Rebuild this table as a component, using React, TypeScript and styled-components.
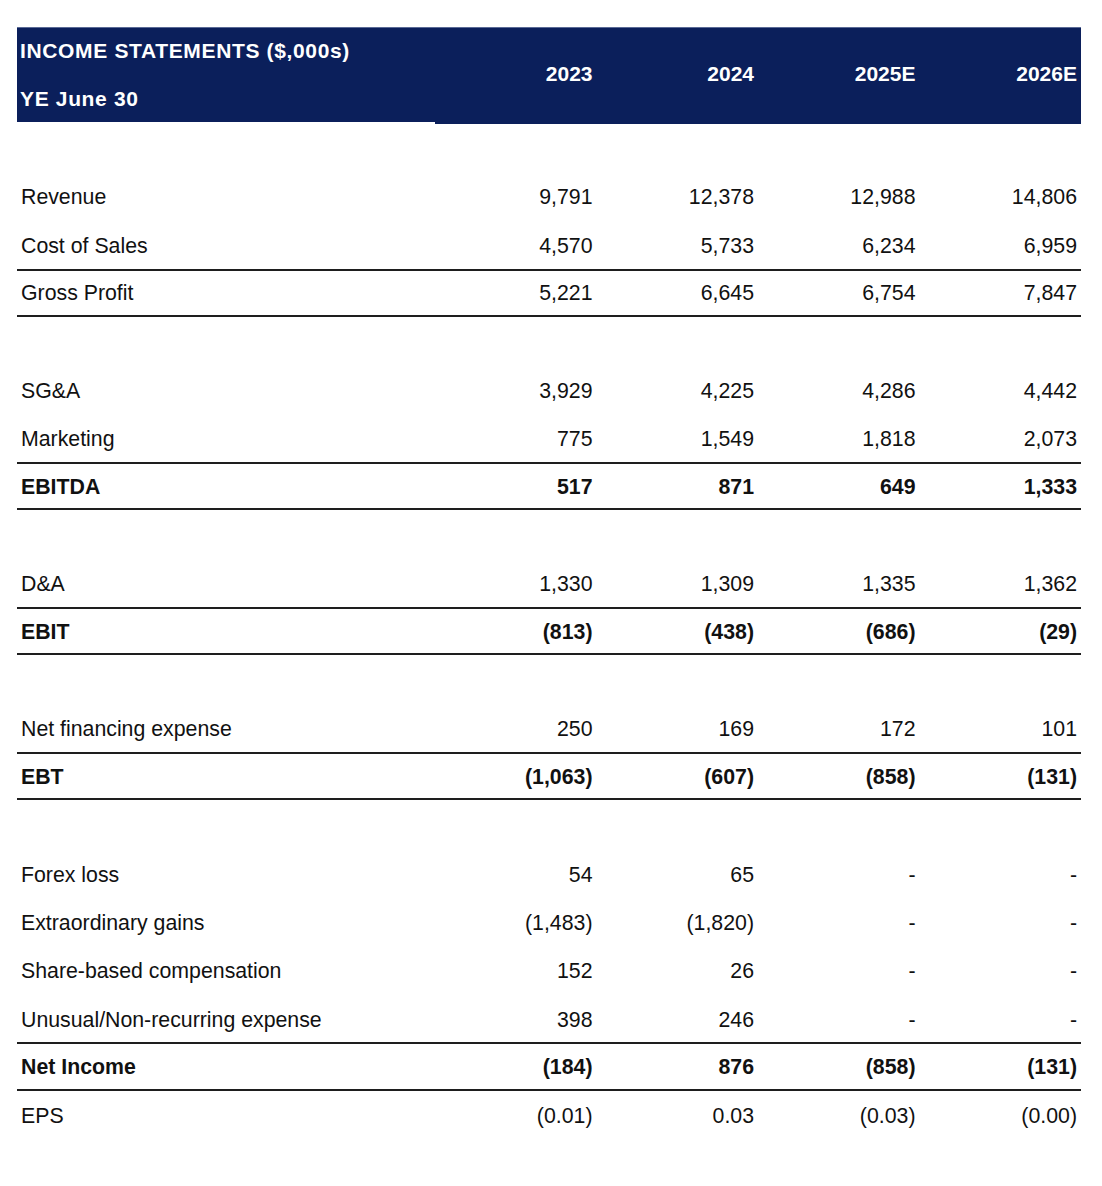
import React from "react";
import styled, { createGlobalStyle } from "styled-components";

const GlobalStyle = createGlobalStyle`
  html, body {
    margin: 0;
    padding: 0;
    background: #ffffff;
  }
  body {
    font-family: "Liberation Sans", Arial, sans-serif;
    color: #111111;
  }
`;

const NAVY = "#0b1f5b";
const COLS = "418px repeat(4, 161.5px)";
const ROW_H = 48.37;

const Page = styled.div`
  padding: 27px 0 0 17px;
  width: 1064px;
`;

const Header = styled.div`
  display: grid;
  grid-template-columns: ${COLS};
  align-items: start;
  color: #ffffff;
  font-weight: 700;
  font-size: 21px;
`;

const TitleCell = styled.div`
  background: ${NAVY};
  height: 95px;
  box-sizing: border-box;
  border-top: 1px solid #5a6a95;
  padding-left: 3px;
  display: grid;
  grid-template-rows: 45px 51px;
  align-items: center;
`;

const TitleLine = styled.div`
  line-height: 24px;
  white-space: nowrap;
  letter-spacing: 0.65px;
`;

const YearsBlock = styled.div`
  grid-column: 2 / span 4;
  background: ${NAVY};
  height: 97px;
  box-sizing: border-box;
  border-top: 1px solid #5a6a95;
  display: grid;
  grid-template-columns: repeat(4, 1fr);
  align-items: center;
  padding-bottom: 5px;
`;

const Year = styled.div`
  text-align: right;
  padding-right: 4px;
  line-height: 24px;
`;

const Spacer = styled.div<{ $h: number }>`
  height: ${(p) => p.$h}px;
`;

const Row = styled.div<{ $total?: boolean; $bold?: boolean }>`
  display: grid;
  grid-template-columns: ${COLS};
  align-items: center;
  height: ${ROW_H}px;
  box-sizing: border-box;
  padding-top: 2px;
  font-size: 21.3px;
  font-weight: ${(p) => (p.$bold ? 700 : 400)};
  border-top: ${(p) => (p.$total ? "2px solid #1e1e1e" : "none")};
  border-bottom: ${(p) => (p.$total ? "2px solid #1e1e1e" : "none")};
  margin-top: ${(p) => (p.$total ? "-1px" : "0")};
  margin-bottom: ${(p) => (p.$total ? "1px" : "0")};
`;

const Label = styled.div`
  padding-left: 4px;
  white-space: nowrap;
`;

const Value = styled.div`
  text-align: right;
  padding-right: 4px;
  white-space: nowrap;
`;

type RowData = {
  label: string;
  values: string[];
  total?: boolean;
  bold?: boolean;
};

type Item = RowData | "gap";

const items: Item[] = [
  { label: "Revenue", values: ["9,791", "12,378", "12,988", "14,806"] },
  { label: "Cost of Sales", values: ["4,570", "5,733", "6,234", "6,959"] },
  { label: "Gross Profit", values: ["5,221", "6,645", "6,754", "7,847"], total: true },
  "gap",
  { label: "SG&A", values: ["3,929", "4,225", "4,286", "4,442"] },
  { label: "Marketing", values: ["775", "1,549", "1,818", "2,073"] },
  { label: "EBITDA", values: ["517", "871", "649", "1,333"], total: true, bold: true },
  "gap",
  { label: "D&A", values: ["1,330", "1,309", "1,335", "1,362"] },
  { label: "EBIT", values: ["(813)", "(438)", "(686)", "(29)"], total: true, bold: true },
  "gap",
  { label: "Net financing expense", values: ["250", "169", "172", "101"] },
  { label: "EBT", values: ["(1,063)", "(607)", "(858)", "(131)"], total: true, bold: true },
  "gap",
  { label: "Forex loss", values: ["54", "65", "-", "-"] },
  { label: "Extraordinary gains", values: ["(1,483)", "(1,820)", "-", "-"] },
  { label: "Share-based compensation", values: ["152", "26", "-", "-"] },
  { label: "Unusual/Non-recurring expense", values: ["398", "246", "-", "-"] },
  { label: "Net Income", values: ["(184)", "876", "(858)", "(131)"], total: true, bold: true },
  { label: "EPS", values: ["(0.01)", "0.03", "(0.03)", "(0.00)"] },
];

export default function App() {
  return (
    <>
      <GlobalStyle />
      <Page>
        <Header>
          <TitleCell>
            <TitleLine>INCOME STATEMENTS ($,000s)</TitleLine>
            <TitleLine>YE June 30</TitleLine>
          </TitleCell>
          <YearsBlock>
            {["2023", "2024", "2025E", "2026E"].map((y) => (
              <Year key={y}>{y}</Year>
            ))}
          </YearsBlock>
        </Header>
        <Spacer $h={48.8} />
        {items.map((it, i) =>
          it === "gap" ? (
            <Spacer key={i} $h={ROW_H} />
          ) : (
            <Row key={i} $total={it.total} $bold={it.bold}>
              <Label>{it.label}</Label>
              {it.values.map((v, j) => (
                <Value key={j}>{v}</Value>
              ))}
            </Row>
          )
        )}
      </Page>
    </>
  );
}
